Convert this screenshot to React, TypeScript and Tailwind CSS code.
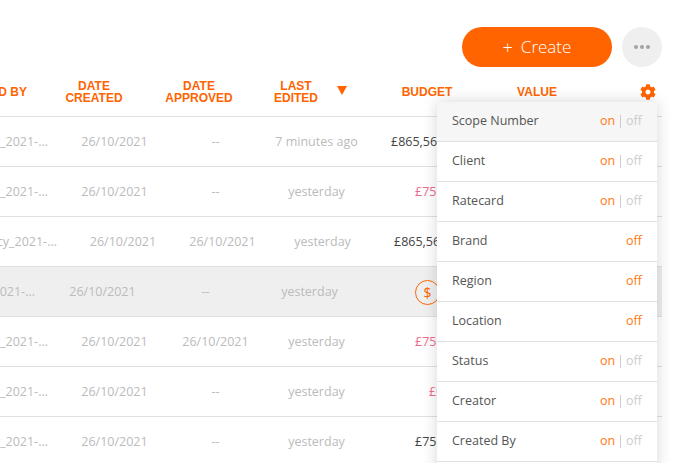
import { FaCog } from "react-icons/fa";

const font = "font-['Open_Sans',sans-serif]";
const dates = "26/10/2021";

type RowData = {
  name: string;
  nameCls: string;
  dateCls: string;
  approved: string;
  approvedCls: string;
  edited: string;
  editedCls: string;
  budget?: string;
  budgetCls?: string;
  highlighted?: boolean;
  dollar?: boolean;
};

const rows: RowData[] = [
  { name: "Scope_Agency_2021-...", nameCls: "w-[48px]", dateCls: "w-[133px]", approved: "--", approvedCls: "w-[69px]", edited: "7 minutes ago", editedCls: "w-[133px]", budget: "£865,567.00", budgetCls: "pl-[8px] text-[#444]" },
  { name: "Scope_Agency_2021-...", nameCls: "w-[48px]", dateCls: "w-[133px]", approved: "--", approvedCls: "w-[69px]", edited: "yesterday", editedCls: "w-[133px]", budget: "£755,000.00", budgetCls: "pl-[32px] text-[#ee6a8a]" },
  { name: "Scope_Policy_2021-...", nameCls: "w-[57px]", dateCls: "w-[132px]", approved: "26/10/2021", approvedCls: "w-[67px]", edited: "yesterday", editedCls: "w-[133px]", budget: "£865,567.00", budgetCls: "pl-[5px] text-[#444]" },
  { name: "Scope_Agency_2021-...", nameCls: "w-[35px]", dateCls: "w-[135px]", approved: "--", approvedCls: "w-[71px]", edited: "yesterday", editedCls: "w-[137px]", highlighted: true, dollar: true },
  { name: "Scope_Agency_2021-...", nameCls: "w-[48px]", dateCls: "w-[133px]", approved: "26/10/2021", approvedCls: "w-[69px]", edited: "yesterday", editedCls: "w-[133px]", budget: "£755,000.00", budgetCls: "pl-[32px] text-[#ee6a8a]" },
  { name: "Scope_Agency_2021-...", nameCls: "w-[48px]", dateCls: "w-[133px]", approved: "--", approvedCls: "w-[69px]", edited: "yesterday", editedCls: "w-[133px]", budget: "£0.00", budgetCls: "pl-[46px] text-[#ee6a8a]" },
  { name: "Scope_Agency_2021-...", nameCls: "w-[48px]", dateCls: "w-[133px]", approved: "--", approvedCls: "w-[69px]", edited: "yesterday", editedCls: "w-[133px]", budget: "£755,000.00", budgetCls: "pl-[32px] text-[#444]" },
];

const menu: { label: string; mode: "both" | "off" }[] = [
  { label: "Scope Number", mode: "both" },
  { label: "Client", mode: "both" },
  { label: "Ratecard", mode: "both" },
  { label: "Brand", mode: "off" },
  { label: "Region", mode: "off" },
  { label: "Location", mode: "off" },
  { label: "Status", mode: "both" },
  { label: "Creator", mode: "both" },
  { label: "Created By", mode: "both" },
  { label: "Value", mode: "both" },
];

function Row({ r }: { r: RowData }) {
  return (
    <div
      className={`flex h-[50px] w-[662px] items-center border-b border-[#e0e0e0] pt-[2px] text-[12.5px] text-[#bbbbbb] ${
        r.highlighted ? "bg-[#efefef]" : ""
      }`}
    >
      <div className={`flex shrink-0 justify-end overflow-hidden ${r.nameCls}`}>
        <span className="shrink-0 whitespace-nowrap">{r.name}</span>
      </div>
      <div className={`shrink-0 text-center ${r.dateCls}`}>{dates}</div>
      <div className={`shrink-0 text-center ${r.approvedCls}`}>{r.approved}</div>
      <div className={`shrink-0 whitespace-nowrap text-center ${r.editedCls}`}>{r.edited}</div>
      {r.dollar ? (
        <div className="ml-[37px] flex h-[25px] w-[25px] shrink-0 items-center justify-center rounded-full border border-[#ff6600] text-[14px] font-medium text-[#ff6600]">
          $
        </div>
      ) : (
        <div className={`whitespace-nowrap ${r.budgetCls}`}>{r.budget}</div>
      )}
    </div>
  );
}

export default function App() {
  return (
    <div className={`relative h-[463px] w-[679px] overflow-hidden bg-white ${font}`}>
      <div className="flex h-[67px] w-[662px] items-end justify-end gap-[10px]">
        <button className="flex h-[40px] w-[150px] items-center justify-center gap-[8px] rounded-full bg-[#ff6400] text-[17px] font-light text-white">
          <span className="text-[18px]">+</span>
          <span>Create</span>
        </button>
        <button className="flex h-[40px] w-[40px] items-center justify-center gap-[2px] rounded-full bg-[#efefef]">
          <span className="h-[4px] w-[4px] rounded-full bg-[#a3a3a3]" />
          <span className="h-[4px] w-[4px] rounded-full bg-[#a3a3a3]" />
          <span className="h-[4px] w-[4px] rounded-full bg-[#a3a3a3]" />
        </button>
      </div>

      <div className="flex h-[50px] w-[662px] items-center border-b border-[#e0e0e0] pt-[1px] font-['Liberation_Sans',sans-serif] text-[12px] leading-[12px] font-bold text-[#ff6400]">
        <div className="flex w-[27px] shrink-0 justify-end overflow-hidden">
          <span className="shrink-0 whitespace-nowrap">CREATED BY</span>
        </div>
        <div className="w-[134px] shrink-0 text-center">DATE<br />CREATED</div>
        <div className="w-[76px] shrink-0 text-center">DATE<br />APPROVED</div>
        <div className="ml-[24px] w-[70px] shrink-0 text-center">LAST<br />EDITED</div>
        <svg viewBox="0 0 10 9" className="mb-[4px] ml-[6px] h-[9px] w-[10px] shrink-0 fill-[#ff6400]">
          <path d="M0 0h10L5 9z" />
        </svg>
        <div className="w-[160px] shrink-0 text-center">BUDGET</div>
        <div className="w-[60px] shrink-0 text-center">VALUE</div>
        <div className="flex flex-1 justify-end pr-[6px]">
          <FaCog className="h-[16px] w-[16px] text-[#ff6400]" />
        </div>
      </div>

      {rows.map((r, i) => (
        <Row key={i} r={r} />
      ))}

      <div className="absolute top-[102px] left-[437px] w-[220px] bg-white text-[12.5px] text-[#555] shadow-[0_0_14px_rgba(0,0,0,0.16)]">
        {menu.map((m, i) => (
          <div
            key={m.label}
            className={`flex h-[40px] items-center justify-between border-b border-[#e0e0e0] px-[15px] ${
              i === 0 ? "bg-[#f6f6f6]" : ""
            }`}
          >
            <span>{m.label}</span>
            {m.mode === "both" ? (
              <span className="flex items-center">
                <span className="text-[#ff7a10]">on</span>
                <span className="mx-[5px] h-[13px] w-px bg-[#cccccc]" />
                <span className="text-[#cccccc]">off</span>
              </span>
            ) : (
              <span className="text-[#ff7a10]">off</span>
            )}
          </div>
        ))}
      </div>
    </div>
  );
}
